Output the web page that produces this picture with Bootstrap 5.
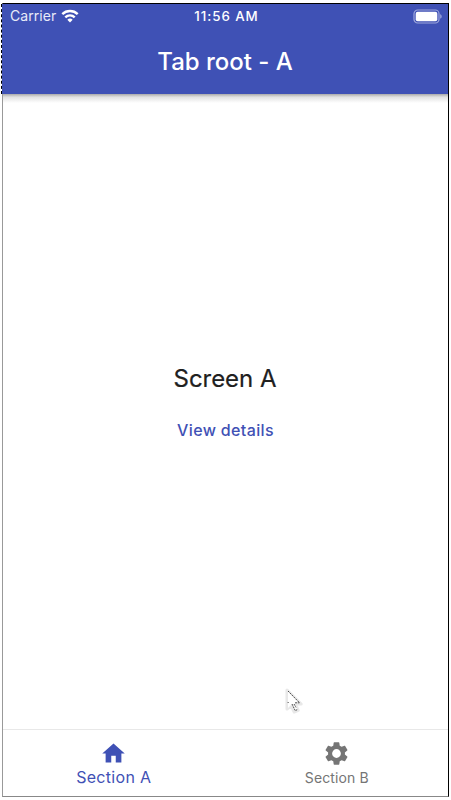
<!DOCTYPE html>
<html lang="en">
<head>
<meta charset="utf-8">
<meta name="viewport" content="width=device-width, initial-scale=1">
<title>Tab root - A</title>
<link href="https://cdn.jsdelivr.net/npm/bootstrap@5.3.0/dist/css/bootstrap.min.css" rel="stylesheet">
<style>
body{font-family:Inter,Roboto,sans-serif;background:#fff;height:800px;padding:3px 2px;overflow:hidden}
.phone{width:447px;height:794px;border:1px solid #999;border-top-color:#000;border-right-color:#000;border-bottom-color:#888}
.app-header{height:90px;margin-left:-2px;border-left:1px dashed #000;background:#3f51b5;background-clip:padding-box;color:#fff;position:relative}
.app-header::after{content:"";position:absolute;left:1px;right:0;top:100%;height:9px;background:linear-gradient(#aaa,#e2e2e2 35%,#fff)}
.status{height:24px;padding:0 6px 0 8px;font-size:14px;line-height:24px}
.status > div{flex:1 1 0}
.carrier{letter-spacing:.05px;color:#e8eaf8}
.clock{font-size:13.3px;font-weight:500;letter-spacing:.95px;margin-right:-1px}
.app-title{font-size:24px;line-height:30px;font-weight:500;letter-spacing:-.03px;padding-top:19px}
.screen-name{font-size:24px;line-height:30px;letter-spacing:-.05px;color:#202020;-webkit-text-stroke:.2px #202020;margin:270px 0 0;padding-right:1px}
.details{font-size:16px;line-height:20px;font-weight:500;letter-spacing:.35px;color:#3f51b5;margin-top:26px}
.tabs{height:67px;border-top:1px solid #e8e8e8}
.tab-a{color:#3f51b5;font-size:16px;line-height:20px;letter-spacing:.3px;padding-right:1px}
.tab-b{color:#757575;font-size:14px;line-height:20px;letter-spacing:.1px}
.tab-a svg,.tab-b svg{margin-top:10px}
.tab-b span{margin-top:1px}
.pointer{left:283px;top:687px}
</style>
<script src="https://cdn.jsdelivr.net/npm/bootstrap@5.3.0/dist/js/bootstrap.bundle.min.js"></script>
</head>
<body>
<div class="phone d-flex flex-column">
  <header class="app-header">
    <div class="status d-flex align-items-center">
      <div class="carrier d-flex align-items-center"><span>Carrier</span>
        <svg class="ms-1" width="20" height="16" viewBox="0 0 20 16" fill="none" stroke="#fff" stroke-width="2.4"><path d="M2.3 6.2a11 11 0 0 1 15.4 0M5.3 9.3a6.7 6.7 0 0 1 9.4 0"/><path d="M10 14.6l-2.7-2.8a3.9 3.9 0 0 1 5.4 0z" fill="#fff" stroke="none"/></svg>
      </div>
      <span class="clock">11:56 AM</span>
      <div class="d-flex justify-content-end">
        <svg width="30" height="15" viewBox="0 0 30 15"><rect x="2" y="1" width="25" height="13" rx="3.7" fill="none" stroke="#9da6dc" stroke-width="1.2"/><rect x="3.7" y="2.7" width="21.6" height="9.6" rx="2" fill="#fff"/><path d="M28.2 5.3c2 .7 2 3.7 0 4.4z" fill="#9da6dc"/></svg>
      </div>
    </div>
    <h1 class="app-title text-center mb-0">Tab root - A</h1>
  </header>
  <main class="flex-grow-1 text-center">
    <h2 class="screen-name fw-normal">Screen A</h2>
    <a class="details d-inline-block text-decoration-none" href="#">View details</a>
  </main>
  <nav class="tabs d-flex">
    <a class="tab-a w-50 d-flex flex-column align-items-center text-decoration-none" href="#">
      <svg width="27" height="27" viewBox="0 0 24 24" fill="currentColor"><path d="M10 20v-6h4v6h5v-8h3L12 3 2 12h3v8z"/></svg>
      <span>Section A</span>
    </a>
    <a class="tab-b w-50 d-flex flex-column align-items-center text-decoration-none" href="#">
      <svg width="27" height="27" viewBox="0 0 24 24" fill="currentColor"><path d="M19.43 12.98c.04-.32.07-.64.07-.98s-.03-.66-.07-.98l2.11-1.65c.19-.15.24-.42.12-.64l-2-3.46c-.12-.22-.39-.3-.61-.22l-2.49 1c-.52-.4-1.08-.73-1.69-.98l-.38-2.65C14.46 2.18 14.25 2 14 2h-4c-.25 0-.46.18-.49.42l-.38 2.65c-.61.25-1.17.59-1.69.98l-2.49-1c-.23-.09-.49 0-.61.22l-2 3.46c-.13.22-.07.49.12.64l2.11 1.65c-.04.32-.07.65-.07.98s.03.66.07.98l-2.11 1.65c-.19.15-.24.42-.12.64l2 3.46c.12.22.39.3.61.22l2.49-1c.52.4 1.08.73 1.69.98l.38 2.65c.03.24.24.42.49.42h4c.25 0 .46-.18.49-.42l.38-2.65c.61-.25 1.17-.59 1.69-.98l2.49 1c.23.09.49 0 .61-.22l2-3.46c.12-.22.07-.49-.12-.64l-2.11-1.65zM12 15.9a3.9 3.9 0 1 1 0-7.8 3.9 3.9 0 0 1 0 7.8z"/></svg>
      <span>Section B</span>
    </a>
  </nav>
</div>
<svg class="pointer position-absolute" width="22" height="32" viewBox="0 0 22 32"><path d="M4 3v19l4-3.5 3.2 6.5 4-1.7-3-6.3h6z" fill="#fff" stroke="#ddd" stroke-width="3" stroke-linejoin="round" opacity=".65"/><path d="M5 4v17l4-4 3 6.5 2.4-1-2.8-6.3H17z" fill="#fff"/><path d="M5 4l11.5 11.8H12M5 15l.3 1M9 17l3.2 6.5 2-.8M11 17l2 3.4" fill="none" stroke="#222" stroke-width=".8" stroke-dasharray="2 .7"/></svg>
</body>
</html>
